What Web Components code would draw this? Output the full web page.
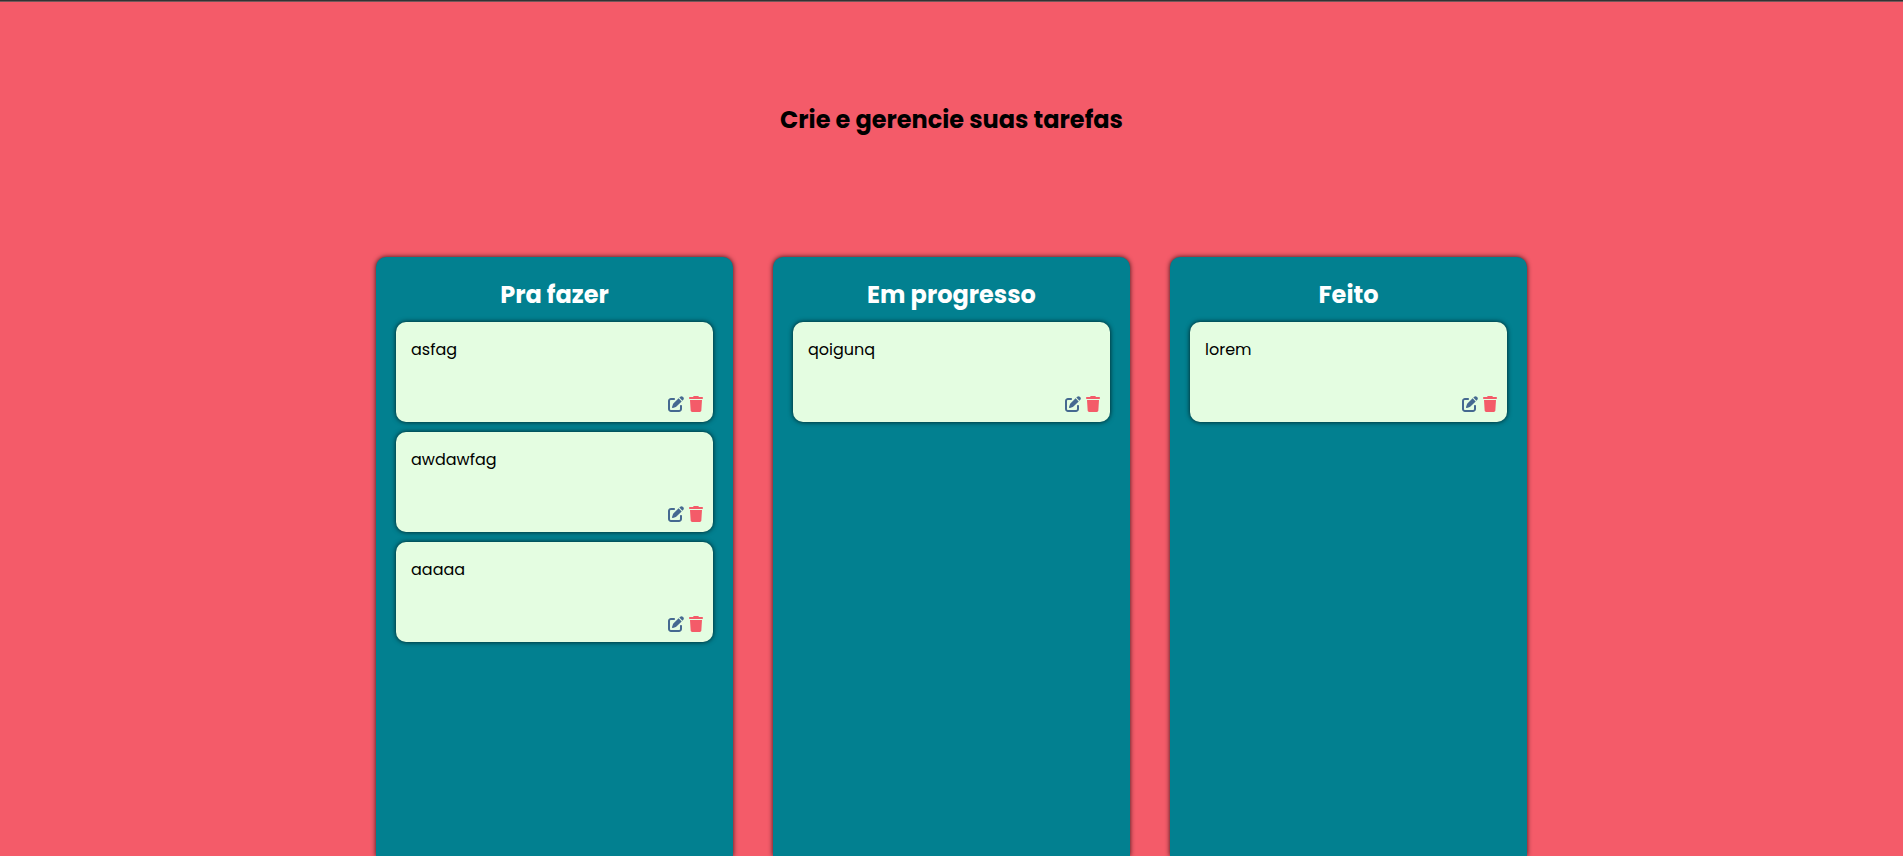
<!DOCTYPE html>
<html lang="pt-BR">
<head>
<meta charset="utf-8">
<meta name="viewport" content="width=device-width, initial-scale=1">
<title>Tarefas</title>
<style>
  body {
    margin: 0;
    background: #f45b69;
    color: #000;
    font: 16px/26px Poppins, Inter, sans-serif;
  }
</style>
</head>
<body>
<task-board heading="Crie e gerencie suas tarefas">
  <task-column heading="Pra fazer">
    <task-card>asfag</task-card>
    <task-card>awdawfag</task-card>
    <task-card>aaaaa</task-card>
  </task-column>
  <task-column heading="Em progresso">
    <task-card>qoigunq</task-card>
  </task-column>
  <task-column heading="Feito">
    <task-card>lorem</task-card>
  </task-column>
</task-board>

<template id="board-template">
  <style>
    :host {
      display: flex;
      flex-direction: column;
      box-sizing: border-box;
      min-height: 100vh;
      border-top: 1px solid #333;
    }
    header { border-top: 1px solid #74575a; padding: 100px 20px 120px; text-align: center; }
    h1 { margin: 0; font-size: 24px; line-height: 35px; font-weight: 700; }
    main {
      flex: 1;
      display: grid;
      grid-template-columns: repeat(3, minmax(0, 1fr));
      gap: 40px;
      box-sizing: border-box;
      width: 100%;
      max-width: 1151px;
      margin: 0 auto;
    }
  </style>
  <header><h1></h1></header>
  <main><slot></slot></main>
</template>

<template id="column-template">
  <style>
    :host {
      display: flex;
      flex-direction: column;
      gap: 10px;
      padding: 20px;
      border-radius: 10px 10px 0 0;
      background: #028090;
      box-shadow: 0 0 5px rgba(0, 0, 0, .8);
    }
    h2 { margin: 0; color: #fff; font-size: 24px; line-height: 35px; font-weight: 700; text-align: center; }
  </style>
  <h2></h2>
  <slot></slot>
</template>

<template id="card-template">
  <style>
    :host {
      display: flex;
      flex-direction: column;
      justify-content: space-between;
      box-sizing: border-box;
      min-height: 100px;
      padding: 15px 10px 10px 15px;
      border-radius: 10px;
      background: #e4fde1;
      box-shadow: 0 0 5px rgba(0, 0, 0, .8);
    }
    p { margin: 0; }
    .actions { display: flex; justify-content: flex-end; gap: 5px; }
    button { display: block; padding: 0; border: 0; background: none; cursor: pointer; }
    svg { display: block; height: 16px; fill: currentColor; }
    .edit { color: #456990; }
    .remove { color: #f45b69; }
  </style>
  <p><slot></slot></p>
  <div class="actions">
    <button class="edit" type="button" aria-label="Editar">
      <svg width="16" viewBox="0 0 512 512" aria-hidden="true"><path d="M471.6 21.7c-21.9-21.9-57.3-21.9-79.2 0L362.3 51.7l97.9 97.9 30.1-30.1c21.9-21.9 21.9-57.3 0-79.2L471.6 21.7zm-299.2 220c-6.1 6.1-10.8 13.6-13.5 21.9l-29.6 88.8c-2.9 8.6-.6 18.1 5.8 24.6s15.9 8.7 24.6 5.8l88.8-29.6c8.2-2.7 15.7-7.4 21.9-13.5L437.7 172.3 339.7 74.3 172.4 241.7zM96 64C43 64 0 107 0 160V416c0 53 43 96 96 96H352c53 0 96-43 96-96V320c0-17.7-14.3-32-32-32s-32 14.3-32 32v96c0 17.7-14.3 32-32 32H96c-17.7 0-32-14.3-32-32V160c0-17.7 14.3-32 32-32h96c17.7 0 32-14.3 32-32s-14.3-32-32-32H96z"/></svg>
    </button>
    <button class="remove" type="button" aria-label="Excluir">
      <svg width="14" viewBox="0 0 448 512" aria-hidden="true"><path d="M135.2 17.7L128 32H32C14.3 32 0 46.3 0 64S14.3 96 32 96H416c17.7 0 32-14.3 32-32s-14.3-32-32-32H320l-7.2-14.3C307.4 6.8 296.3 0 284.2 0H163.8c-12.1 0-23.2 6.8-28.6 17.7zM416 128H32L53.2 467c1.6 25.3 22.6 45 47.9 45H346.9c25.3 0 46.3-19.7 47.9-45L416 128z"/></svg>
    </button>
  </div>
</template>

<script>
  class TemplateElement extends HTMLElement {
    constructor() {
      super();
      const template = document.getElementById(this.constructor.template);
      this.attachShadow({ mode: "open" }).append(template.content.cloneNode(true));
    }
    connectedCallback() {
      const title = this.shadowRoot.querySelector("h1, h2");
      if (title) title.textContent = this.getAttribute("heading");
    }
  }
  customElements.define("task-board", class extends TemplateElement { static template = "board-template"; });
  customElements.define("task-column", class extends TemplateElement { static template = "column-template"; });
  customElements.define("task-card", class extends TemplateElement { static template = "card-template"; });
</script>
</body>
</html>
